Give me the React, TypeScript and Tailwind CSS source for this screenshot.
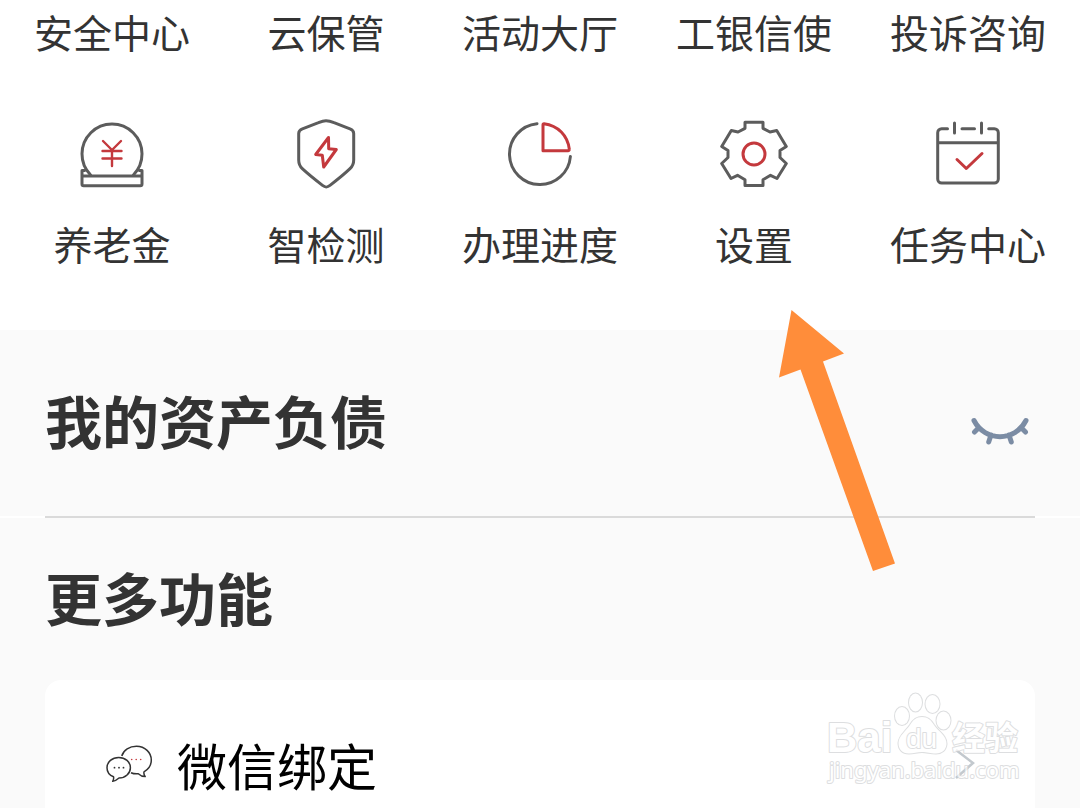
import type { ReactNode } from "react";

const GREY = "#5c5c5c";
const RED = "#c4393d";

function Icon({ children }: { children: ReactNode }) {
  return (
    <svg
      viewBox="0 0 72 72"
      className="size-[72px]"
      fill="none"
      stroke={GREY}
      strokeWidth={3}
      strokeLinecap="round"
      strokeLinejoin="round"
      aria-hidden="true"
    >
      {children}
    </svg>
  );
}

function PensionIcon() {
  return (
    <Icon>
      <path d="M14.6 57A30 30 0 1 1 57.4 57" />
      <path d="M8.5 52.5H6V66a1.7 1.7 0 0 0 1.7 1.7H64.3A1.7 1.7 0 0 0 66 66V52.5H63.5M6 58H66" />
      <path
        d="M27 23L36 32L45 23M26.5 33H45.5M26.5 40.5H45.5M36 32V48"
        stroke={RED}
        strokeWidth={2.4}
      />
    </Icon>
  );
}

function ShieldIcon() {
  return (
    <Icon>
      <path d="M36 2.7C38.5 2.7 41 3.4 44 4.7L60 10.8C62.7 11.8 63.7 13 63.7 15.5V42C63.7 45.5 62.8 48 60 50.7C54 56.5 47 62 40 67.4C37 69.7 35.5 69.7 32.5 67.4C25.5 62 18.5 56.5 12.3 50.7C9.5 48 8.7 45.5 8.7 42V15.5C8.7 13 9.7 11.8 12.4 10.8L28.5 4.7C31.5 3.4 34 2.7 36 2.7Z" />
      <path
        d="M38.5 19.5L25.7 36.5L32.3 37.3L33.7 49L46.3 31.5L38.7 30.7Z"
        stroke={RED}
      />
    </Icon>
  );
}

function ProgressIcon() {
  return (
    <Icon>
      <path d="M33 5.7A30.5 30.5 0 1 0 66.4 38.5" />
      <path
        d="M40 5.7A1 1 0 0 0 39 6.7V32.7H64A1.3 1.3 0 0 0 65.3 31.2C63.7 17.5 54 7.5 40 5.7Z"
        stroke={RED}
      />
    </Icon>
  );
}

function SettingsIcon() {
  return (
    <Icon>
      <path d="M27 4.3H45V10.3L52 14L58.7 12.5L68.3 28.5L62 32.5V39.5L68.3 45.5L59 60.5L52.5 57.3L45 61.7V67.5H27V61.7L19.5 57.3L13 60.5L3.7 45.5L10 39.5V32.5L3.7 28.5L13.3 12.5L20 14L27 10.3Z" />
      <circle cx="36" cy="36" r="11" stroke={RED} />
    </Icon>
  );
}

function TaskIcon() {
  return (
    <Icon>
      <path d="M15.5 10.7H9.7A4 4 0 0 0 5.7 14.7V61A4 4 0 0 0 9.7 65H62.3A4 4 0 0 0 66.3 61V14.7A4 4 0 0 0 62.3 10.7H56.7M30 10.7H42.5M22.5 5V15M49.5 5V15M5.7 24.7H66.3" />
      <path d="M25 41.5L34.3 50.5L50 35.5" stroke={RED} />
    </Icon>
  );
}

const topLabels = ["安全中心", "云保管", "活动大厅", "工银信使", "投诉咨询"];

const shortcuts = [
  { label: "养老金", icon: <PensionIcon /> },
  { label: "智检测", icon: <ShieldIcon /> },
  { label: "办理进度", icon: <ProgressIcon /> },
  { label: "设置", icon: <SettingsIcon /> },
  { label: "任务中心", icon: <TaskIcon /> },
];

function ChatIcon() {
  return (
    <svg
      viewBox="0 0 48 40"
      className="h-10 w-12"
      fill="none"
      stroke="#333"
      strokeWidth={1.5}
      strokeLinejoin="round"
      aria-hidden="true"
    >
      <path d="M16.8 12C18.5 6 24.5 2.3 31.5 2.3C40 2.3 46.3 8.5 46.3 16C46.3 21 43.5 25.3 39 27.8C38.6 29.5 39 31 40.2 32.6C37.500 32.600 35 31.500 33.300 29.800C30.800 30 28.300 29.800 26 28.700" />
      <path d="M13.7 13.4C20.3 13.4 25.4 18 25.4 23.7C25.4 29.5 20.3 34 14 34C12 35.8 10 37 7.7 37.3C8.6 35.8 8.9 34.3 8.5 32.8C4.6 31.2 2 27.7 2 23.7C2 18 7.2 13.4 13.7 13.4Z" />
      <g fill="#333" stroke="none">
        <circle cx="9.5" cy="23.7" r="0.9" />
        <circle cx="14" cy="23.7" r="0.9" />
        <circle cx="18.5" cy="23.7" r="0.9" />
      </g>
      <g fill={RED} stroke="none">
        <circle cx="26.7" cy="15.5" r="0.8" />
        <circle cx="31.2" cy="15.5" r="0.8" />
        <circle cx="35.7" cy="15.5" r="0.8" />
      </g>
    </svg>
  );
}

function Watermark() {
  return (
    <svg
      viewBox="0 0 200 96"
      className="pointer-events-none absolute right-[55px] bottom-[22px] h-24 w-[200px] opacity-70"
      fill="#ffffff"
      stroke="#cfd1d3"
      strokeWidth={2}
      strokeLinejoin="round"
      style={{ paintOrder: "stroke" }}
    >
      <text x="2" y="62" className="font-['Liberation_Sans'] text-[42px] font-bold">
        Bai
      </text>
      <ellipse cx="77" cy="26" rx="7" ry="9" />
      <ellipse cx="90.500" cy="12.500" rx="6.500" ry="9" />
      <ellipse cx="107.500" cy="14" rx="7" ry="9" />
      <ellipse cx="118.500" cy="30.500" rx="7" ry="9" />
      <path d="M97 27C103 27 106 30 109 35C113 41 122 46 121.500 54C121 60 117 63.500 111 63.500C105 63.500 102 62 97 62C92 62 89 63.500 84 63.500C77 63.500 73.500 59 73.500 53C73.500 46 81 41 85 35C88 30 91 27 97 27Z" />
      <text x="81" y="58" className="font-['Liberation_Sans'] text-[28px]">
        du
      </text>
      <text x="127" y="60" className="font-['Noto_Sans_CJK_SC',sans-serif] text-[33px] font-bold">
        经验
      </text>
      <text x="4" y="88" className="font-['Noto_Sans'] text-[22px]">
        jingyan.baidu.com
      </text>
    </svg>
  );
}

export default function App() {
  return (
    <main className="relative min-h-screen overflow-hidden bg-[#fafafa] font-['Noto_Sans_CJK_SC',sans-serif] text-[#333]">
      <section className="bg-white px-[5px] pt-[11px] pb-[67px] text-[39px] leading-10">
        <div className="grid grid-cols-5">
          {topLabels.map((label) => (
            <button key={label} type="button" className="whitespace-nowrap">
              {label}
            </button>
          ))}
        </div>
        <div className="mt-[67px] grid grid-cols-5">
          {shortcuts.map(({ label, icon }) => (
            <button
              key={label}
              type="button"
              className="flex flex-col items-center gap-[33px] whitespace-nowrap"
            >
              {icon}
              <span>{label}</span>
            </button>
          ))}
        </div>
      </section>

      <section className="flex items-center justify-between px-[45px] pt-[57px] pb-[65px]">
        <h2 className="text-[57px] leading-[64px] font-bold">我的资产负债</h2>
        <button type="button" aria-label="显示资产" className="pt-[26px] pr-[5px]">
          <svg
            viewBox="0 0 60 32"
            className="h-8 w-[60px]"
            fill="none"
            stroke="#7b8ca4"
            strokeWidth={5}
            strokeLinecap="round"
          >
            <path d="M4 4.5C15 26 45 26 56 4.5M8.5 12L4.5 16M51.5 12L55.5 16M21 19L18.7 26M39 19L41.3 26" />
          </svg>
        </button>
      </section>

      <div className="bg-white px-[45px]">
        <hr className="border-t-2 border-[#dadada]" />
      </div>

      <section className="px-[45px] pt-[46px]">
        <h2 className="text-[57px] leading-[64px] font-bold">更多功能</h2>
        <a
          href="#wechat"
          className="mt-[52px] flex items-center rounded-t-2xl bg-white px-[60px] pt-14 pb-4 text-black"
        >
          <ChatIcon />
          <span className="ml-6 text-[50px] leading-[56px]">微信绑定</span>
          <svg
            viewBox="0 0 20 32"
            className="ml-auto h-8 w-5"
            fill="none"
            stroke="#c3c9ce"
            strokeWidth={2.5}
            aria-hidden="true"
          >
            <path d="M1 2L18 15L1 30" />
          </svg>
        </a>
      </section>

      <Watermark />

      <svg
        viewBox="0 0 116 261"
        className="pointer-events-none absolute top-[310px] left-[779px] h-[261px] w-[116px]"
        fill="#ff8d3a"
        aria-hidden="true"
      >
        <path d="M12.5 0L65 43.5L44 51.5L116 253.5L94 261L21.5 59.5L0 67.5Z" />
      </svg>
    </main>
  );
}
